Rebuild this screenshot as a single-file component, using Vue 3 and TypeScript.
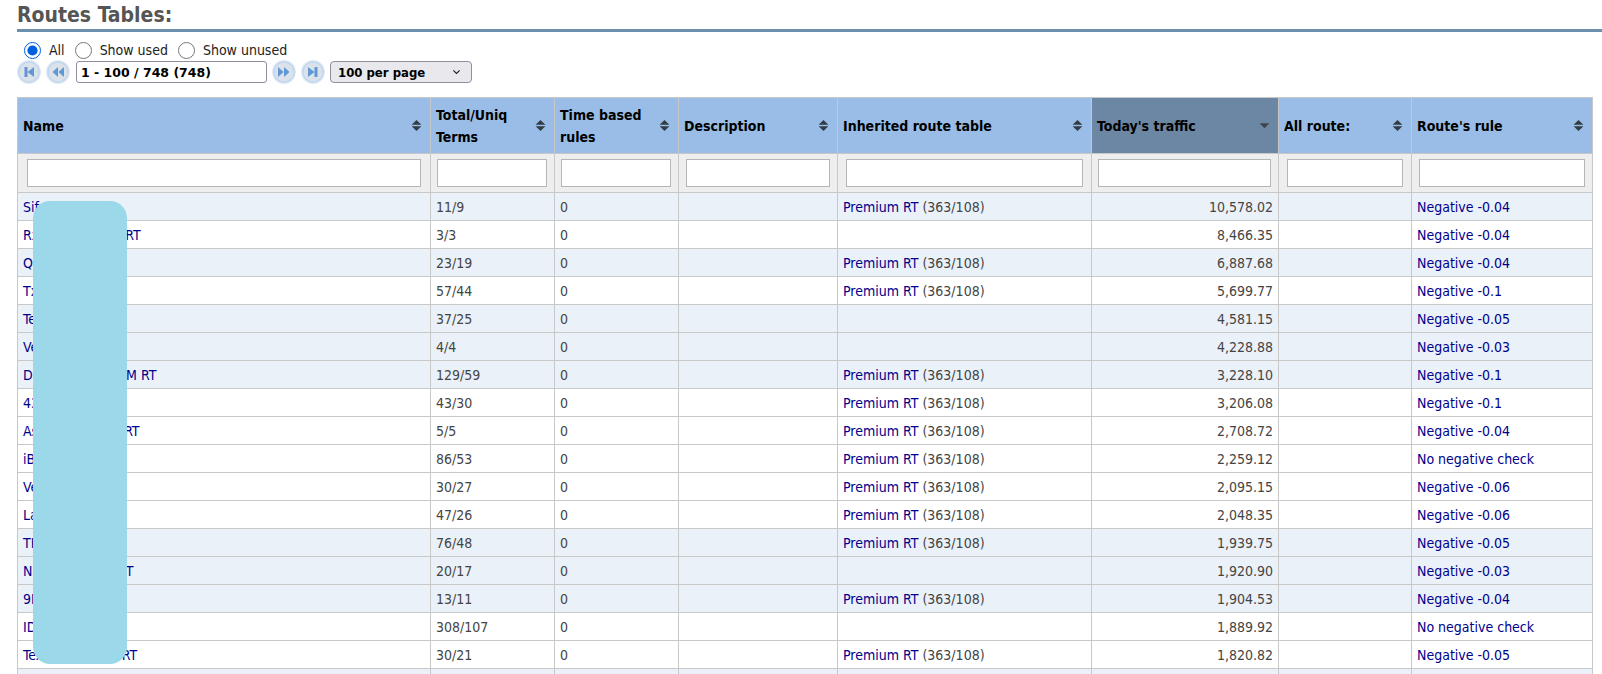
<script setup lang="ts">
interface Row {
  name: string
  terms: string
  inherited: boolean
  traffic: string
  rule: string
  alt: boolean
}

const cols = [
  { label: 'Name', width: 413 },
  { label: 'Total/Uniq Terms', width: 124 },
  { label: 'Time based rules', width: 124 },
  { label: 'Description', width: 159 },
  { label: 'Inherited route table', width: 254 },
  { label: "Today's traffic", width: 187, sorted: true },
  { label: 'All route:', width: 133 },
  { label: "Route's rule", width: 181 },
]

const N = 'No negative check'
const rows: Row[] = [
  { name: 'Sifxxxx', terms: '11/9', inherited: true, traffic: '10,578.02', rule: 'Negative -0.04', alt: true },
  { name: 'Rxxxxxxxxxxxx RT', terms: '3/3', inherited: false, traffic: '8,466.35', rule: 'Negative -0.04', alt: false },
  { name: 'Qxxxxxxxxxxx T', terms: '23/19', inherited: true, traffic: '6,887.68', rule: 'Negative -0.04', alt: true },
  { name: 'Txxxx', terms: '57/44', inherited: true, traffic: '5,699.77', rule: 'Negative -0.1', alt: false },
  { name: 'Texxx', terms: '37/25', inherited: false, traffic: '4,581.15', rule: 'Negative -0.05', alt: true },
  { name: 'Vexxx', terms: '4/4', inherited: false, traffic: '4,228.88', rule: 'Negative -0.03', alt: true },
  { name: 'Dxxxxxxxxxxxx M RT', terms: '129/59', inherited: true, traffic: '3,228.10', rule: 'Negative -0.1', alt: true },
  { name: '43xxx', terms: '43/30', inherited: true, traffic: '3,206.08', rule: 'Negative -0.1', alt: false },
  { name: 'Asxxxxxxxxxxx RT', terms: '5/5', inherited: true, traffic: '2,708.72', rule: 'Negative -0.04', alt: false },
  { name: 'iBxxx', terms: '86/53', inherited: true, traffic: '2,259.12', rule: N, alt: false },
  { name: 'Vexxx', terms: '30/27', inherited: true, traffic: '2,095.15', rule: 'Negative -0.06', alt: false },
  { name: 'Laxxx', terms: '47/26', inherited: true, traffic: '2,048.35', rule: 'Negative -0.06', alt: false },
  { name: 'THxxx', terms: '76/48', inherited: true, traffic: '1,939.75', rule: 'Negative -0.05', alt: true },
  { name: 'Nxxxxxxxxxxxx T', terms: '20/17', inherited: false, traffic: '1,920.90', rule: 'Negative -0.03', alt: true },
  { name: '9Exxx', terms: '13/11', inherited: true, traffic: '1,904.53', rule: 'Negative -0.04', alt: true },
  { name: 'IDxxx', terms: '308/107', inherited: false, traffic: '1,889.92', rule: N, alt: false },
  { name: 'Texxxxxxxxxxx RT', terms: '30/21', inherited: true, traffic: '1,820.82', rule: 'Negative -0.05', alt: false },
]

const pagers = {
  first: 'M7.5 7h3v10h-3z M17 7v10l-6.5-5z',
  prev: 'M12 7v10l-5.5-5z M18 7v10l-5.5-5z',
  next: 'M6 7v10l5.5-5z M12 7v10l5.5-5z',
  last: 'M7 7v10l6.5-5z M13.5 7h3v10h-3z',
}
</script>

<template>
  <div class="page">
    <h2 class="title">Routes Tables:</h2>

    <div class="radios">
      <label class="radio"><input type="radio" name="show" checked />All</label>
      <label class="radio"><input type="radio" name="show" />Show used</label>
      <label class="radio"><input type="radio" name="show" />Show unused</label>
    </div>

    <div class="pager">
      <svg v-for="k in (['first', 'prev'] as const)" :key="k" class="pbtn" viewBox="0 0 24 24">
        <circle cx="12" cy="12" r="12" fill="url(#glow)" />
        <circle cx="12" cy="12" r="9.5" fill="#dbe2ea" />
        <path :d="pagers[k]" fill="#6198d4" />
      </svg>
      <input class="pageinfo" type="text" value="1 - 100 / 748 (748)" />
      <svg v-for="k in (['next', 'last'] as const)" :key="k" class="pbtn" viewBox="0 0 24 24">
        <circle cx="12" cy="12" r="12" fill="url(#glow)" />
        <circle cx="12" cy="12" r="9.5" fill="#dbe2ea" />
        <path :d="pagers[k]" fill="#6198d4" />
      </svg>
      <div class="perpage">
        <span>100 per page</span>
        <svg class="chev" viewBox="0 0 10 6"><path d="M1.5 1.2 5 4.7l3.5-3.5" fill="none" stroke="#222" stroke-width="1.3" /></svg>
      </div>
      <svg class="defs" width="0" height="0">
        <defs>
          <radialGradient id="glow">
            <stop offset="0.72" stop-color="#a9c6e8" />
            <stop offset="1" stop-color="#e6eff9" />
          </radialGradient>
        </defs>
      </svg>
    </div>

    <table class="grid">
      <colgroup>
        <col v-for="c in cols" :key="c.label" :style="{ width: c.width + 'px' }" />
      </colgroup>
      <thead>
        <tr class="heads">
          <th v-for="c in cols" :key="c.label" :class="{ sorted: c.sorted }">
            <div class="thbox">
              <span>{{ c.label }}</span>
              <svg v-if="c.sorted" class="sort" viewBox="0 0 10 12"><path d="M0.5 4h9L5 8.5z" fill="#3d4650" /></svg>
              <svg v-else class="sort" viewBox="0 0 10 12"><path d="M5 1l4.5 4.2h-9z M0.5 6.8h9L5 11z" fill="#333c44" /></svg>
            </div>
          </th>
        </tr>
        <tr class="filters">
          <td v-for="c in cols" :key="c.label"><input type="text" /></td>
        </tr>
      </thead>
      <tbody>
        <tr v-for="(r, i) in rows" :key="i" :class="{ alt: r.alt }">
          <td><a>{{ r.name }}</a></td>
          <td>{{ r.terms }}</td>
          <td>0</td>
          <td></td>
          <td><template v-if="r.inherited"><a>Premium RT</a> (363/108)</template></td>
          <td class="num">{{ r.traffic }}</td>
          <td></td>
          <td><a>{{ r.rule }}</a></td>
        </tr>
        <tr class="alt">
          <td v-for="c in cols" :key="c.label"></td>
        </tr>
      </tbody>
    </table>

    <div class="redaction"></div>
  </div>
</template>

<style>
html, body { margin: 0; overflow: hidden; background: #fff; }
</style>

<style scoped>
.page {
  position: relative;
  height: 674px;
  overflow: hidden;
  font-family: "DejaVu Sans Condensed", "DejaVu Sans", sans-serif;
  font-stretch: condensed;
  font-size: 14px;
  color: #444;
}
.title {
  margin: 0 0 0 17px;
  height: 29px;
  box-sizing: content-box;
  border-bottom: 3px solid #6c8fb0;
  font-size: 21px;
  line-height: 31px;
  font-weight: bold;
  color: #555;
}
.radios {
  display: flex;
  height: 18px;
  margin-top: 9px;
  padding-left: 24px;
  gap: 10px;
  color: #222;
}
.radio {
  display: flex;
  align-items: center;
  gap: 8px;
}
.radio input {
  width: 17px;
  height: 17px;
  margin: 0;
  accent-color: #0060df;
}
.pager {
  display: flex;
  align-items: center;
  height: 24px;
  margin: 1px 0 0 17px;
}
.pbtn {
  width: 24px;
  height: 24px;
  margin-right: 5px;
  flex: none;
}
.pageinfo {
  box-sizing: border-box;
  width: 191px;
  height: 22px;
  margin: 0 5px 0 1px;
  padding: 0 4px;
  border: 1px solid #8f8f9d;
  border-radius: 3px;
  font-family: "DejaVu Sans", sans-serif;
  font-size: 12.5px;
  font-weight: bold;
  color: #000;
}
.perpage {
  box-sizing: border-box;
  display: flex;
  align-items: center;
  justify-content: space-between;
  width: 142px;
  height: 22px;
  padding: 0 10px 0 7px;
  border: 1px solid #8f8f9d;
  border-radius: 4px;
  background: #e9e9ed;
  font-family: "DejaVu Sans", sans-serif;
  font-size: 13px;
  font-weight: bold;
  color: #000;
}
.chev { width: 9px; height: 6px; }
.defs { position: absolute; }
.grid {
  table-layout: fixed;
  border-collapse: collapse;
  width: 1575px;
  margin: 13px 0 0 17px;
}
.grid th,
.grid td {
  border: 1px solid #c8c8c8;
  padding: 0 5px;
  overflow: hidden;
}
.heads th {
  height: 56px;
  box-sizing: border-box;
  background: #99bde6;
  color: #000;
  text-align: left;
  font-size: 14px;
  font-weight: bold;
  line-height: 22px;
}
.heads th.sorted { background: #6c87a3; }
.thbox {
  display: flex;
  align-items: center;
  justify-content: space-between;
  padding-right: 3px;
}
.thbox span { max-width: 100px; }
.heads th:nth-child(1) .thbox span,
.heads th:nth-child(n+4) .thbox span { max-width: none; }
.sort { width: 11px; height: 13px; flex: none; }
.filters td {
  height: 39px;
  box-sizing: border-box;
  padding: 0 8px;
  background: #eee;
}
.filters input {
  display: block;
  box-sizing: border-box;
  width: 100%;
  height: 28px;
  border: 1px solid #b5b5b5;
  background: #fff;
}
.filters td:nth-child(1) { padding: 0 9px; }
.filters td:nth-child(2),
.filters td:nth-child(3),
.filters td:nth-child(6) { padding: 0 7px 0 6px; }
.filters td:nth-child(4),
.filters td:nth-child(8) { padding: 0 7px; }
tbody td {
  height: 28px;
  box-sizing: border-box;
  white-space: nowrap;
}
tbody tr.alt td { background: #eaf1f9; }
tbody a { color: #00008b; }
.num { text-align: right; }
.redaction {
  position: absolute;
  left: 33px;
  top: 201px;
  width: 94px;
  height: 463px;
  border-radius: 17px;
  background: #9bd9ea;
}
</style>
